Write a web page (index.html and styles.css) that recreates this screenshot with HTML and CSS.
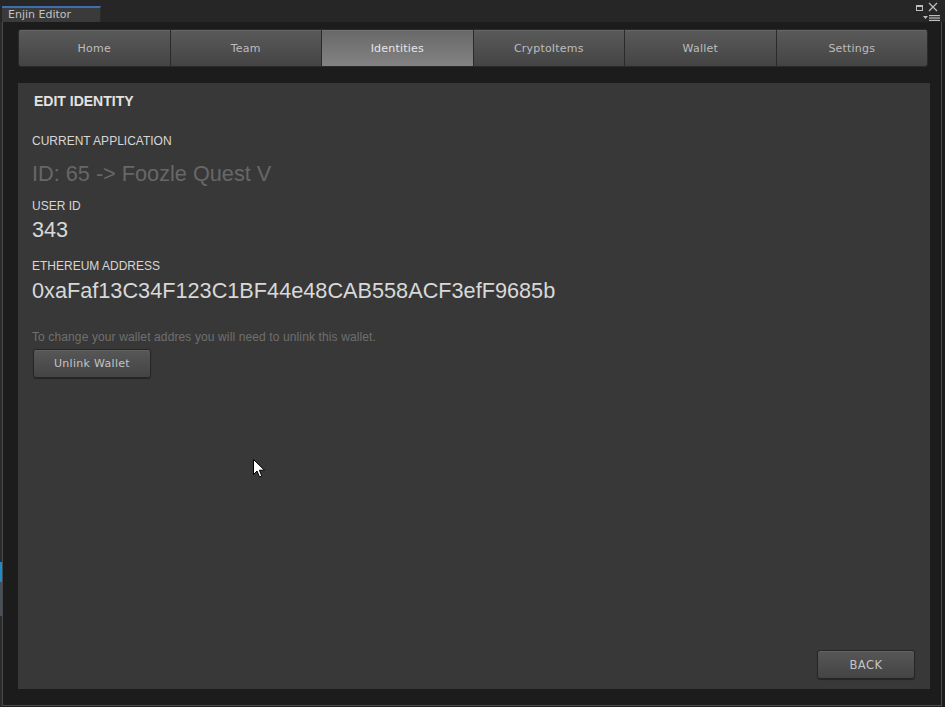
FILE: index.html
```html
<!DOCTYPE html>
<html>
<head>
<meta charset="utf-8">
<link rel="stylesheet" href="styles.css">
</head>
<body>
<div class="app">
  <div class="titlebar">
    <div class="wintab">Enjin Editor</div>
    <div class="winctl">
      <div class="ctl-row">
        <svg class="ic-max" width="7" height="6" viewBox="0 0 7 6"><rect x="0.5" y="0.5" width="6" height="5" fill="none" stroke="#bdbdbd" stroke-width="1"/><rect x="0" y="0" width="7" height="2" fill="#bdbdbd"/></svg>
        <svg class="ic-close" width="10" height="10" viewBox="0 0 10 10"><path d="M1 1 L9 9 M9 1 L1 9" stroke="#bdbdbd" stroke-width="1.2"/></svg>
      </div>
      <svg class="ic-menu" width="17" height="6" viewBox="0 0 17 6"><path d="M0 1 L5 1 L2.5 4 Z" fill="#bdbdbd"/><rect x="6" y="0" width="11" height="1.2" fill="#bdbdbd"/><rect x="6" y="2.4" width="11" height="1.2" fill="#bdbdbd"/><rect x="6" y="4.8" width="11" height="1.2" fill="#bdbdbd"/></svg>
    </div>
  </div>
  <div class="body-row">
    <div class="behind"><span class="behind-blue"></span><span class="behind-gray"></span></div>
    <div class="window">
      <nav class="tabs">
        <div class="tab">Home</div>
        <div class="tab">Team</div>
        <div class="tab active">Identities</div>
        <div class="tab">CryptoItems</div>
        <div class="tab">Wallet</div>
        <div class="tab">Settings</div>
      </nav>
      <section class="panel">
        <h1 class="title">EDIT IDENTITY</h1>
        <div class="label l-app">CURRENT APPLICATION</div>
        <div class="value muted v-app">ID: 65 -&gt; Foozle Quest V</div>
        <div class="label l-user">USER ID</div>
        <div class="value v-user">343</div>
        <div class="label l-eth">ETHEREUM ADDRESS</div>
        <div class="value v-eth">0xaFaf13C34F123C1BF44e48CAB558ACF3efF9685b</div>
        <p class="hint">To change your wallet addres you will need to unlink this wallet.</p>
        <button class="btn unlink">Unlink Wallet</button>
        <button class="btn back">BACK</button>
      </section>
    </div>
  </div>
  <svg class="cursor" width="13" height="20" viewBox="0 0 13 20"><path d="M0.5 0.5 L0.5 15.5 L4 12 L6.5 18 L8.8 17 L6.4 11.2 L11.5 11.2 Z" fill="#ffffff" stroke="#000000" stroke-width="1"/></svg>
</div>
</body>
</html>
```

FILE: styles.css
```css
* { box-sizing: border-box; }
html, body { margin: 0; padding: 0; }
body {
  width: 945px;
  height: 707px;
  overflow: hidden;
  background: #1c1c1c;
  font-family: "Liberation Sans", Arial, sans-serif;
}
.app {
  position: relative;
  width: 945px;
  height: 707px;
  display: flex;
  flex-direction: column;
}
.titlebar {
  height: 22px;
  flex: none;
  background: #262626;
  display: flex;
  align-items: flex-end;
}
.wintab {
  margin-left: 2px;
  width: 99px;
  height: 16px;
  background: #3a3a3a;
  border-top: 2px solid #3e6db0;
  border-right: 1px solid #2c2c2c;
  color: #c2c2c2;
  font-family: "DejaVu Sans", sans-serif;
  font-size: 11px;
  line-height: 14px;
  padding-left: 6px;
}
.winctl {
  margin-left: auto;
  margin-right: 5px;
  align-self: stretch;
  display: flex;
  flex-direction: column;
  align-items: flex-end;
  padding-top: 2px;
}
.ctl-row { display: flex; align-items: center; gap: 5px; height: 10px; padding-right: 2px; }
.ic-max { margin-top: 1px; }
.ic-menu { margin-top: 3px; }
.body-row {
  flex: 1;
  display: flex;
}
.behind {
  width: 2px;
  background: #2b2b2b;
  display: flex;
  flex-direction: column;
  padding-top: 540px;
}
.behind-blue { display: block; height: 20px; background: #1d8ccc; }
.behind-gray { display: block; height: 34px; background: #45505a; }
.window {
  width: 940px;
  height: 684px;
  border-left: 1px solid #4a4a4a;
  border-right: 1px solid #4a4a4a;
  border-bottom: 1px solid #4a4a4a;
  background: #1c1c1c;
  padding: 7px 0 0 15px;
  display: flex;
  flex-direction: column;
}
.tabs {
  width: 910px;
  height: 38px;
  display: flex;
  border: 1px solid #2a2a2a;
  border-radius: 3px;
  overflow: hidden;
  background: #2a2a2a;
  gap: 1px;
}
.tab {
  flex: 1;
  display: flex;
  align-items: center;
  justify-content: center;
  background: linear-gradient(#5a5a5a, #444444);
  box-shadow: inset 0 1px 0 #646464;
  color: #bdbdbd;
  font-family: "DejaVu Sans", sans-serif;
  font-size: 11px;
  letter-spacing: 0.2px;
  padding-top: 1px;
}
.tab.active {
  background: linear-gradient(#686868, #838383);
  box-shadow: inset 0 1px 0 #737373;
  color: #e6e6e6;
}
.panel {
  margin-top: 16px;
  width: 912px;
  height: 606px;
  background: #383838;
  padding: 10px 14px 10px 14px;
  display: flex;
  flex-direction: column;
  align-items: flex-start;
}
.title {
  margin: 0 0 0 2px;
  font-size: 14px;
  font-weight: bold;
  line-height: 16px;
  color: #e2e2e2;
}
.label {
  font-size: 12px;
  line-height: 14px;
  color: #d6d6d6;
}
.value {
  font-size: 21.7px;
  line-height: 26px;
  color: #d8d8d8;
}
.value.muted { color: #676767; }
.l-app { margin-top: 25px; }
.v-app { margin-top: 13px; }
.l-user { margin-top: 12px; }
.v-user { margin-top: 4px; }
.l-eth { margin-top: 16px; }
.v-eth { margin-top: 5px; }
.hint {
  margin: 26px 0 0 0;
  font-size: 12px;
  line-height: 14px;
  letter-spacing: 0.12px;
  color: #6f6f6f;
}
.btn {
  font-family: "DejaVu Sans", sans-serif;
  font-size: 11px;
  color: #c4c4c4;
  background: linear-gradient(#575757, #444444);
  border: 1px solid #262626;
  border-radius: 3px;
  box-shadow: inset 0 1px 0 #626262, 0 1px 1px rgba(0,0,0,0.35);
  padding: 0;
  cursor: default;
}
.unlink {
  margin: 5px 0 0 1px;
  width: 118px;
  height: 29px;
  letter-spacing: 0.3px;
}
.back {
  margin-top: auto;
  align-self: flex-end;
  margin-right: 1px;
  width: 98px;
  height: 29px;
  letter-spacing: 0.5px;
  font-size: 11.5px;
}
.cursor {
  position: absolute;
  left: 253px;
  top: 459px;
}
```
